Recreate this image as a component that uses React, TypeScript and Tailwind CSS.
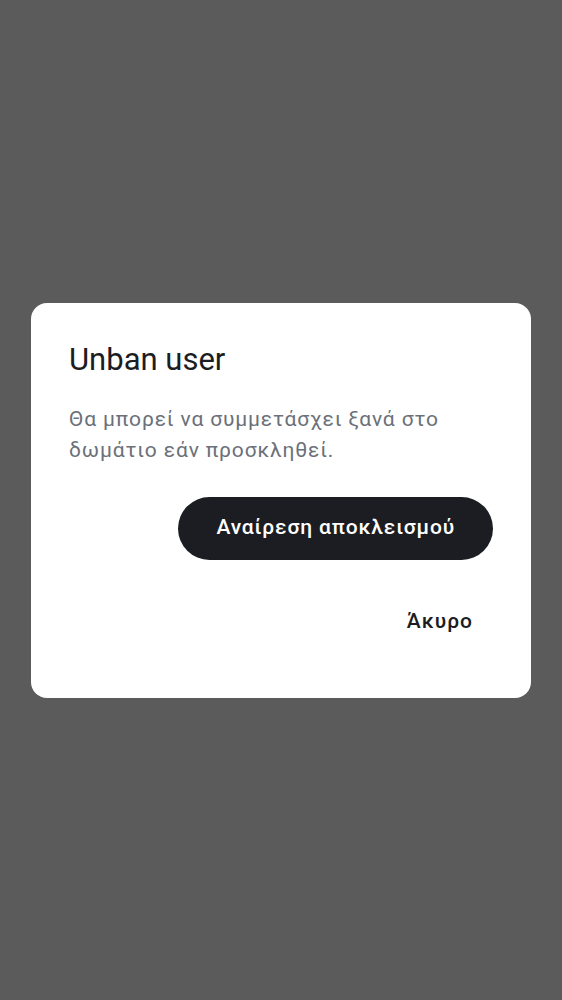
export default function App() {
  return (
    <div
      className="w-full h-[1000px] bg-[#5b5b5b] flex items-center justify-center px-[31px]"
      style={{ fontFamily: "Roboto, 'Noto Sans', sans-serif" }}
    >
      <div className="w-[500px] bg-white rounded-[16px] pt-[38px] pb-[44px] px-[38px] flex flex-col">
        <h2 className="text-[31px] leading-[38px] text-[#1b1d22] font-normal">Unban user</h2>
        <p className="mt-[25px] text-[21px] leading-[31px] text-[#6b7079] tracking-[0.85px]">
          Θα μπορεί να συμμετάσχει ξανά στο δωμάτιο εάν προσκληθεί.
        </p>
        <div className="mt-[31px] flex flex-col items-end gap-[31px]">
          <button className="h-[63px] px-[38px] rounded-full bg-[#1b1d22] text-white text-[21px] font-medium tracking-[0.85px]">
            Αναίρεση αποκλεισμού
          </button>
          <button className="h-[63px] px-[20px] rounded-full text-[#1b1d22] text-[21px] font-medium tracking-[1px]">
            Άκυρο
          </button>
        </div>
      </div>
    </div>
  );
}
